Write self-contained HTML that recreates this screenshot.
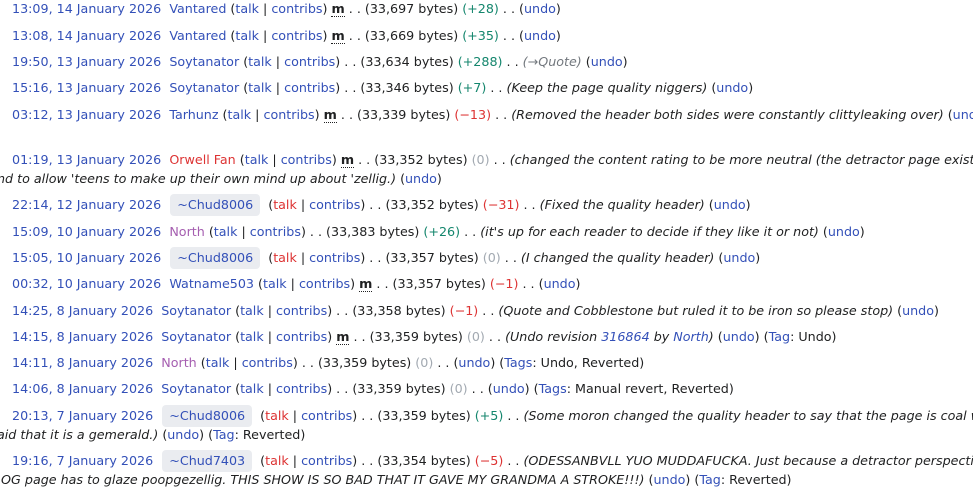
<!DOCTYPE html>
<html><head><meta charset="utf-8"><style>
html,body{overflow:hidden}
body{margin:0;width:973px;height:501px;background:#fff;font-family:"DejaVu Sans",sans-serif;font-size:12.7px;color:#202122;position:relative}
.r{position:absolute;left:12px;white-space:nowrap;line-height:18px}
.w{left:-3px}
a{color:#3350b8;text-decoration:none}
.red{color:#d33}
.vis{color:#a55eb0}
.pos{color:#14866d}
.neg{color:#d33}
.z{color:#a2a9b1}
i{font-style:italic}
.m{font-weight:bold;border-bottom:1px dotted #202122}
.box{display:inline-block;background:#eaecf0;border-radius:4px;padding:2px 7px;line-height:18px;margin:0 4px 0 5px}
</style></head><body>
<div class="r" style="top:0px"><a>13:09, 14 January 2026</a>&nbsp; <a>Vantared</a> (<a>talk</a> | <a>contribs</a>) <span class="m">m</span> . . (33,697 bytes) <span class="pos">(+28)</span> . . (<a>undo</a>)</div>
<div class="r" style="top:27px"><a>13:08, 14 January 2026</a>&nbsp; <a>Vantared</a> (<a>talk</a> | <a>contribs</a>) <span class="m">m</span> . . (33,669 bytes) <span class="pos">(+35)</span> . . (<a>undo</a>)</div>
<div class="r" style="top:53px"><a>19:50, 13 January 2026</a>&nbsp; <a>Soytanator</a> (<a>talk</a> | <a>contribs</a>) . . (33,634 bytes) <span class="pos">(+288)</span> . . <i style="color:#72777d">(→Quote)</i> (<a>undo</a>)</div>
<div class="r" style="top:79px"><a>15:16, 13 January 2026</a>&nbsp; <a>Soytanator</a> (<a>talk</a> | <a>contribs</a>) . . (33,346 bytes) <span class="pos">(+7)</span> . . <i>(Keep the page quality niggers)</i> (<a>undo</a>)</div>
<div class="r" style="top:106px"><a>03:12, 13 January 2026</a>&nbsp; <a>Tarhunz</a> (<a>talk</a> | <a>contribs</a>) <span class="m">m</span> . . (33,339 bytes) <span class="neg">(−13)</span> . . <i>(Removed the header both sides were constantly clittyleaking over)</i> (<a>undo</a>)</div>
<div class="r" style="top:151px"><a>01:19, 13 January 2026</a>&nbsp; <a class="red">Orwell Fan</a> (<a>talk</a> | <a>contribs</a>) <span class="m">m</span> . . (33,352 bytes) <span class="z">(0)</span> . . <i>(changed the content rating to be more neutral (the detractor page exists and</i></div>
<div class="r w" style="top:170px"><i>nd to allow 'teens to make up their own mind up about 'zellig.)</i> (<a>undo</a>)</div>
<div class="r" style="top:194px"><a>22:14, 12 January 2026</a> <span class="box"><a>~Chud8006</a></span> (<a class="red">talk</a> | <a>contribs</a>) . . (33,352 bytes) <span class="neg">(−31)</span> . . <i>(Fixed the quality header)</i> (<a>undo</a>)</div>
<div class="r" style="top:223px"><a>15:09, 10 January 2026</a>&nbsp; <a class="vis">North</a> (<a>talk</a> | <a>contribs</a>) . . (33,383 bytes) <span class="pos">(+26)</span> . . <i>(it's up for each reader to decide if they like it or not)</i> (<a>undo</a>)</div>
<div class="r" style="top:247px"><a>15:05, 10 January 2026</a> <span class="box"><a>~Chud8006</a></span> (<a class="red">talk</a> | <a>contribs</a>) . . (33,357 bytes) <span class="z">(0)</span> . . <i>(I changed the quality header)</i> (<a>undo</a>)</div>
<div class="r" style="top:275px"><a>00:32, 10 January 2026</a>&nbsp; <a>Watname503</a> (<a>talk</a> | <a>contribs</a>) <span class="m">m</span> . . (33,357 bytes) <span class="neg">(−1)</span> . . (<a>undo</a>)</div>
<div class="r" style="top:302px"><a>14:25, 8 January 2026</a>&nbsp; <a>Soytanator</a> (<a>talk</a> | <a>contribs</a>) . . (33,358 bytes) <span class="neg">(−1)</span> . . <i>(Quote and Cobblestone but ruled it to be iron so please stop)</i> (<a>undo</a>)</div>
<div class="r" style="top:328px"><a>14:15, 8 January 2026</a>&nbsp; <a>Soytanator</a> (<a>talk</a> | <a>contribs</a>) <span class="m">m</span> . . (33,359 bytes) <span class="z">(0)</span> . . <i>(Undo revision <a>316864</a> by <a>North</a>)</i> (<a>undo</a>) (<a>Tag</a>: Undo)</div>
<div class="r" style="top:354px"><a>14:11, 8 January 2026</a>&nbsp; <a class="vis">North</a> (<a>talk</a> | <a>contribs</a>) . . (33,359 bytes) <span class="z">(0)</span> . . (<a>undo</a>) (<a>Tags</a>: Undo, Reverted)</div>
<div class="r" style="top:380px"><a>14:06, 8 January 2026</a>&nbsp; <a>Soytanator</a> (<a>talk</a> | <a>contribs</a>) . . (33,359 bytes) <span class="z">(0)</span> . . (<a>undo</a>) (<a>Tags</a>: Manual revert, Reverted)</div>
<div class="r" style="top:405px"><a>20:13, 7 January 2026</a> <span class="box"><a>~Chud8006</a></span> (<a class="red">talk</a> | <a>contribs</a>) . . (33,359 bytes) <span class="pos">(+5)</span> . . <i>(Some moron changed the quality header to say that the page is coal when</i></div>
<div class="r w" style="top:426px"><i>aid that it is a gemerald.)</i> (<a>undo</a>) (<a>Tag</a>: Reverted)</div>
<div class="r" style="top:450px"><a>19:16, 7 January 2026</a> <span class="box"><a>~Chud7403</a></span> (<a class="red">talk</a> | <a>contribs</a>) . . (33,354 bytes) <span class="neg">(−5)</span> . . <i>(ODESSANBVLL YUO MUDDAFUCKA. Just because a detractor perspective</i></div>
<div class="r w" style="top:471px"><i>&nbsp;OG page has to glaze poopgezellig. THIS SHOW IS SO BAD THAT IT GAVE MY GRANDMA A STROKE!!!)</i> (<a>undo</a>) (<a>Tag</a>: Reverted)</div>
<div class="r" style="top:498px"><a>18:40, 7 January 2026</a>&nbsp; <a>Soytanator</a> (<a>talk</a> | <a>contribs</a>) . . (33,359 bytes)</div>
</body></html>
